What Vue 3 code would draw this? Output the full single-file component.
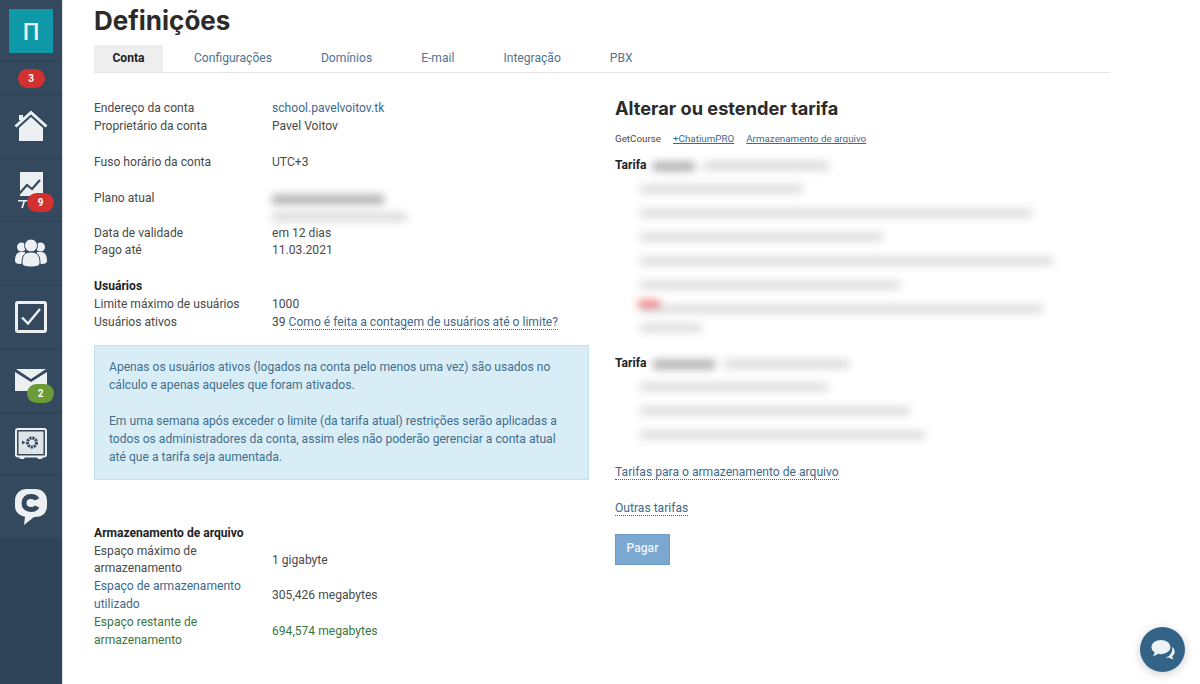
<script setup>
const tabs = ["Conta", "Configurações", "Domínios", "E-mail", "Integração", "PBX"]

const tariffA = [163, 392, 243, 413, 260, 403, 62]
const tariffB = [188, 270, 285]
</script>

<template>
  <div class="page">
    <aside class="sidebar">
      <nav class="menu">
        <div class="item logoItem"><div class="logo">П</div></div>
        <div class="item countItem"><span class="badge red">3</span></div>
        <div class="item">
          <svg width="34" height="32" viewBox="0 0 34 32">
            <path d="M5 5h4v5H5z" fill="#edf0f2" />
            <path d="M1.500 16.500 17 2.500l15.500 14" fill="none" stroke="#edf0f2" stroke-width="3" />
            <path d="M5 18 17 7l12 11v13H5z" fill="#edf0f2" />
          </svg>
        </div>
        <div class="item">
          <svg width="26" height="36" viewBox="0 0 26 36">
            <path d="M2 0h23v24H2z" fill="#edf0f2" />
            <path d="M1 22 9 13l5 4 8-9" fill="none" stroke="#34495e" stroke-width="2.200" />
            <path d="M0 28h11v1.600H7L5 36H3.200l2-6.400H0z" fill="#edf0f2" />
          </svg>
          <span class="badge red over">9</span>
        </div>
        <div class="item">
          <svg width="32" height="28" viewBox="0 0 32 28">
            <circle cx="6.500" cy="8" r="4.500" fill="#edf0f2" />
            <circle cx="25.500" cy="8" r="4.500" fill="#edf0f2" />
            <path d="M0 22c0-6 2-9 6-9h4v11l-5 1c-3 0-5-1-5-3zM32 22c0-6-2-9-6-9h-4v11l5 1c3 0 5-1 5-3z" fill="#edf0f2" />
            <circle cx="16" cy="6.500" r="6.500" fill="#edf0f2" stroke="#34495e" stroke-width="1" />
            <path d="M7 24c0-8 3-11 9-11s9 3 9 11c0 3-4 4-9 4s-9-1-9-4z" fill="#edf0f2" stroke="#34495e" stroke-width="1" />
          </svg>
        </div>
        <div class="item">
          <svg width="32" height="32" viewBox="0 0 32 32">
            <rect x="1.500" y="1.500" width="29" height="29" rx="1.500" fill="none" stroke="#edf0f2" stroke-width="3" />
            <path d="M7 16.500l6 6L25 8" fill="none" stroke="#edf0f2" stroke-width="2.400" />
          </svg>
        </div>
        <div class="item">
          <svg width="32" height="22" viewBox="0 0 32 22">
            <path d="M1 0h30L16 10z" fill="#edf0f2" />
            <path d="M0 3l16 10L32 3v19H0z" fill="#edf0f2" />
          </svg>
          <span class="badge green over">2</span>
        </div>
        <div class="item">
          <svg width="32" height="32" viewBox="0 0 32 32">
            <rect x="1" y="1" width="30" height="27.500" rx="2" fill="none" stroke="#edf0f2" stroke-width="2" />
            <rect x="3" y="3" width="26" height="23.500" fill="#dfe4e8" stroke="#34495e" stroke-width="1" />
            <path d="M4 28.500h6L9 31H5zM22 28.500h6l-1 2.500h-4z" fill="#edf0f2" />
            <circle cx="17" cy="14.500" r="4.500" fill="none" stroke="#34495e" stroke-width="3" stroke-dasharray="2.200 0.800" />
            <path d="M7 12.500l3.500 2-3.500 2z" fill="#34495e" />
          </svg>
        </div>
        <div class="item">
          <svg width="32" height="36" viewBox="0 0 32 36">
            <path d="M12 0h8c7 0 12 4.500 12 12v5c0 7-5 11-12 11h-1l-10 8 1-8.300C4 26.500 0 23 0 17v-5C0 4.500 5 0 12 0z" fill="#edf0f2" />
            <path d="M22 10.500c-1-2-3-3-6-3-4.500 0-7 2.500-7 6.500s2.500 6.500 7 6.500c3 0 5-1 6-3" fill="none" stroke="#34495e" stroke-width="5" />
          </svg>
        </div>
      </nav>
    </aside>

    <main class="content">
      <h1 class="title">Definições</h1>
      <div class="tabs">
        <a v-for="(tab, i) in tabs" :key="tab" class="tab" :class="{ active: i === 0 }">{{ tab }}</a>
      </div>

      <div class="columns">
        <section class="left">
          <div class="rows">
            <span>Endereço da conta</span><a class="link">school.pavelvoitov.tk</a>
            <span>Proprietário da conta</span><span>Pavel Voitov</span>
          </div>
          <div class="rows spaced">
            <span>Fuso horário da conta</span><span>UTC+3</span>
          </div>
          <div class="rows spaced">
            <span class="top">Plano atual</span>
            <div class="planBlur">
              <div class="blurBar dark" style="width: 112px"></div>
              <div class="blurBar" style="width: 135px"></div>
            </div>
            <span>Data de validade</span><span>em 12 dias</span>
            <span>Pago até</span><span>11.03.2021</span>
          </div>
          <div class="rows spaced">
            <b class="full">Usuários</b>
            <span>Limite máximo de usuários</span><span>1000</span>
            <span>Usuários ativos</span>
            <span>39 <a class="link dotted">Como é feita a contagem de usuários até o limite?</a></span>
          </div>

          <div class="notice">
            <p>Apenas os usuários ativos (logados na conta pelo menos uma vez) são usados no cálculo e apenas aqueles que foram ativados.</p>
            <p>Em uma semana após exceder o limite (da tarifa atual) restrições serão aplicadas a todos os administradores da conta, assim eles não poderão gerenciar a conta atual até que a tarifa seja aumentada.</p>
          </div>

          <div class="rows storage">
            <b class="full">Armazenamento de arquivo</b>
            <span class="label">Espaço máximo de armazenamento</span><span>1 gigabyte</span>
            <span class="label blue">Espaço de armazenamento utilizado</span><span>305,426 megabytes</span>
            <span class="label greenText">Espaço restante de armazenamento</span><span class="greenText">694,574 megabytes</span>
          </div>
        </section>

        <section class="right">
          <h2 class="subtitle">Alterar ou estender tarifa</h2>
          <div class="products">
            <span>GetCourse</span>
            <a>+ChatiumPRO</a>
            <a>Armazenamento de arquivo</a>
          </div>

          <div class="tariffHead">
            <b>Tarifa</b>
            <div class="headBlur"><div class="blurBar dark" style="width: 42px"></div><div class="blurBar" style="width: 125px"></div></div>
          </div>
          <ul class="blurList">
            <li v-for="(w, i) in tariffA" :key="i" :style="{ width: w + 'px' }" :class="{ short: i === 6 }">
              <i v-if="i === 5" class="redMark"></i>
            </li>
          </ul>

          <div class="tariffHead second">
            <b>Tarifa</b>
            <div class="headBlur"><div class="blurBar dark" style="width: 62px"></div><div class="blurBar" style="width: 125px"></div></div>
          </div>
          <ul class="blurList">
            <li v-for="(w, i) in tariffB" :key="i" :style="{ width: w + 'px' }"></li>
          </ul>

          <p class="moreLink storageLink"><a class="link dotted">Tarifas para o armazenamento de arquivo</a></p>
          <p class="moreLink otherLink"><a class="link dotted">Outras tarifas</a></p>
          <button class="pay">Pagar</button>
        </section>
      </div>
    </main>

    <button class="chat" aria-label="Chat">
      <svg width="24" height="20" viewBox="0 0 28 24">
        <path d="M25 8.500c2 1.500 3 3.500 3 5.500 0 2.200-1 4-3 5.300.1 1.400.700 2.700 1.700 3.700-2 0-3.800-.7-5.300-2-1.500.5-3 .7-4.400.5 3-1 9-5 8-12.500z" fill="#edf2f5" />
        <ellipse cx="11.500" cy="8.500" rx="11.500" ry="8.500" fill="#edf2f5" />
        <path d="M4 14c0 2-.8 3.600-2.400 5 2.500 0 4.800-.8 6.900-2.800z" fill="#edf2f5" />
      </svg>
    </button>
  </div>
</template>

<style>
html, body {
  margin: 0;
  background: #fff;
}
</style>

<style scoped>
.page {
  display: flex;
  height: 684px;
  overflow: hidden;
  position: relative;
  font-family: "Roboto", "Liberation Sans", sans-serif;
  font-size: 12.100px;
  line-height: 17.850px;
  color: #4a4a4a;
}

.sidebar {
  width: 62px;
  flex-shrink: 0;
  background: #2f4459;
  border-right: 1px solid #dfe3e6;
}

.menu {
  background: #34495e;
}

.item {
  height: 63.500px;
  box-sizing: border-box;
  border-bottom: 1px solid #2c4054;
  display: flex;
  align-items: center;
  justify-content: center;
  position: relative;
}

.logoItem {
  height: 61px;
  align-items: flex-start;
  padding-top: 9px;
}

.logo {
  width: 44px;
  height: 44px;
  background: #0e98a8;
  color: #edf0f2;
  font-size: 24px;
  font-weight: 600;
  line-height: 44px;
  text-align: center;
  font-family: "Open Sans", sans-serif;
}

.countItem {
  height: 34px;
  padding-top: 2px;
}

.badge {
  width: 27px;
  height: 19px;
  border-radius: 10px;
  color: #fff;
  font-size: 10px;
  font-weight: 700;
  line-height: 19px;
  text-align: center;
}

.red {
  background: #d3312f;
}

.green {
  background: #6c9a37;
}

.over {
  position: absolute;
  right: 8px;
  bottom: 9px;
}

.content {
  flex: 1;
  padding-left: 31px;
  padding-right: 90px;
  min-width: 0;
}

.title {
  margin: 0;
  padding-top: 4px;
  height: 45px;
  box-sizing: border-box;
  font-family: "Inter", sans-serif;
  font-size: 26px;
  line-height: 33px;
  font-weight: 700;
  color: #2b2b2b;
}

.tabs {
  display: flex;
  border-bottom: 1px solid #e4e4e4;
}

.tab {
  height: 27px;
  line-height: 27px;
  margin-right: 49px;
  color: #4f7390;
}

.tab.active {
  width: 69px;
  text-align: center;
  margin-right: 31px;
  background: #eeeeee;
  color: #222;
  font-weight: 700;
}

.columns {
  display: flex;
}

.left {
  width: 495px;
  flex-shrink: 0;
  padding-top: 27px;
}

.rows {
  display: grid;
  grid-template-columns: 178px 1fr;
  align-items: center;
}

.top {
  align-self: start;
}

.spaced {
  margin-top: 18px;
}

.full {
  grid-column: 1 / 3;
  color: #222;
}

.link {
  color: #3d6a8c;
}

.dotted {
  border-bottom: 1px dotted #3d6a8c;
}

.planBlur {
  display: flex;
  flex-direction: column;
  gap: 9px;
  height: 35px;
  padding-top: 5px;
  box-sizing: border-box;
}

.blurBar {
  height: 8px;
  background: #d6d6d6;
  filter: blur(4px);
}

.blurBar.dark {
  height: 9px;
  background: #ababab;
}

.notice {
  margin-top: 13px;
  height: 135px;
  box-sizing: border-box;
  padding: 12px 21px 12px 14px;
  background: #d9edf7;
  border: 1px solid #c5e3ee;
  color: #42708e;
  line-height: 18px;
}

.notice p {
  margin: 0 0 18px;
}

.storage {
  margin-top: 45px;
}

.label {
  width: 160px;
}

.blue {
  color: #3d6a8c;
}

.greenText {
  color: #3c763d;
}

.right {
  margin-left: 26px;
  flex: 1;
  padding-top: 22px;
}

.subtitle {
  margin: 0;
  font-family: "Inter", sans-serif;
  font-size: 18.200px;
  line-height: 26px;
  font-weight: 700;
  color: #2b2b2b;
}

.products {
  display: flex;
  gap: 12px;
  margin-top: 10px;
  font-size: 9.800px;
  line-height: 16px;
}

.products a {
  color: #3d6a8c;
  text-decoration: underline;
}

.tariffHead {
  display: flex;
  align-items: center;
  gap: 6px;
  margin-top: 10px;
  height: 18px;
  color: #222;
}

.tariffHead.second {
  margin-top: 23px;
}

.headBlur {
  display: flex;
  align-items: center;
  gap: 9px;
}

.blurList {
  list-style: none;
  margin: 10px 0 0;
  padding: 0 0 0 25px;
  display: flex;
  flex-direction: column;
  gap: 16px;
}

.blurList li {
  position: relative;
  height: 8px;
  background: #dadada;
  filter: blur(4px);
}

.blurList li.short {
  margin-top: -5px;
}

.redMark {
  position: absolute;
  left: -2px;
  top: -4px;
  width: 22px;
  height: 5px;
  background: #f05050;
}

.moreLink {
  margin: 0;
  color: #3d6a8c;
}

.storageLink {
  margin-top: 25px;
}

.otherLink {
  margin-top: 18px;
}

.pay {
  display: block;
  margin-top: 16px;
  width: 55px;
  height: 31px;
  border: 1px solid #6d9cc6;
  background: #7ba8d0;
  color: #eef4f9;
  font: inherit;
  font-weight: 500;
  padding: 0;
}

.chat {
  position: absolute;
  left: 1140px;
  top: 627px;
  width: 45px;
  height: 45px;
  border: 0;
  padding: 0;
  border-radius: 50%;
  background: #336488;
  box-shadow: 0 2px 10px rgba(0, 0, 0, 0.2);
  display: flex;
  align-items: center;
  justify-content: center;
}
</style>
